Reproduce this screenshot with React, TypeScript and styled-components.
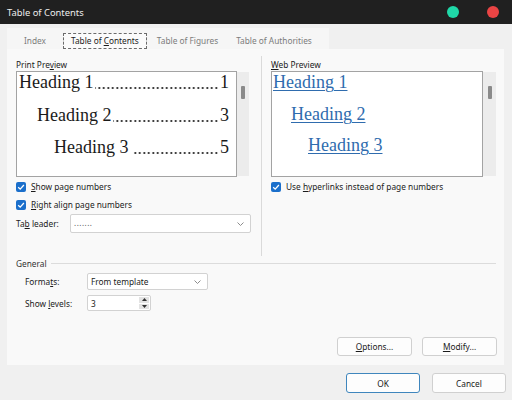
import React from "react"
import styled, { createGlobalStyle } from "styled-components"

const GlobalStyle = createGlobalStyle`
  html, body {
    margin: 0;
    padding: 0;
    background: #f0f0f0;
  }
`

const Window = styled.div`
  width: 512px;
  height: 400px;
  overflow: hidden;
  display: flex;
  flex-direction: column;
  background: #f0f0f0;
  font-family: "Noto Sans", "Open Sans", sans-serif;
  font-size: 8.3px;
  color: #1b1b1b;
`

const TitleBar = styled.div`
  height: 24px;
  flex: none;
  display: flex;
  align-items: center;
  padding-left: 7px;
  background: #202020;
  color: #ececec;
  font-size: 9.4px;
`

const Title = styled.div`
  flex: 1;
`

const Dot = styled.span<{ $color: string }>`
  width: 12px;
  height: 12px;
  border-radius: 50%;
  background: ${(p) => p.$color};
  margin-right: 28px;

  &:last-child {
    margin-right: 13px;
  }
`

const TabStrip = styled.div`
  align-self: flex-start;
  margin: 4px 0 0 7px;
  height: 21px;
  display: flex;
  align-items: flex-end;
  gap: 2px;
  padding: 0 9px;
  background: #f6f6f6;
`

const Tab = styled.div<{ $active?: boolean }>`
  height: 16px;
  box-sizing: border-box;
  padding: 0 7px;
  line-height: 14px;
  border: 1px dashed ${(p) => (p.$active ? "#6b6b6b" : "transparent")};
  background: ${(p) => (p.$active ? "#fbfbfb" : "transparent")};
  color: ${(p) => (p.$active ? "#1b1b1b" : "#7c7c7c")};

  &:first-child {
    margin-right: 7px;
  }
`

const Panel = styled.div`
  height: 316px;
  flex: none;
  box-sizing: border-box;
  margin: 0 8px 0 7px;
  padding: 10px 7px 0 9px;
  display: flex;
  flex-direction: column;
  background: #f9f9f9;
`

const TopArea = styled.div`
  height: 197px;
  display: flex;
`

const Column = styled.div<{ $width: number }>`
  width: ${(p) => p.$width}px;
  display: flex;
  flex-direction: column;
`

const Divider = styled.div`
  width: 1px;
  margin: -3px 9px 0 10px;
  background: #dadada;
`

const Label = styled.div`
  height: 12px;
  line-height: 12px;
`

const U = styled.span`
  text-decoration: underline;
  text-underline-offset: 1px;
`

const PreviewRow = styled.div`
  display: flex;
  height: 106px;
`

const PreviewBox = styled.div<{ $width: number; $gap: number }>`
  width: ${(p) => p.$width}px;
  box-sizing: border-box;
  border: 1px solid #a3a3a3;
  background: #fff;
  padding: 0 7px 0 1px;
  display: flex;
  flex-direction: column;
  gap: ${(p) => p.$gap}px;
  overflow: hidden;
  font-family: "Liberation Serif", "Times New Roman", serif;
  font-size: 18px;
  line-height: 20px;
`

const TocLine = styled.div<{ $indent: number }>`
  display: flex;
  padding-left: ${(p) => p.$indent}px;
  color: #1a1a1a;
  white-space: nowrap;
`

/* dot leader between a heading and its page number */
const Leader = styled.span<{ $gap?: number }>`
  flex: 1;
  min-width: 0;
  margin: 0 1px 0 ${(p) => p.$gap ?? 2}px;
  background-image: radial-gradient(circle, #1a1a1a 0.85px, transparent 1.15px);
  background-size: 4.5px 4px;
  background-repeat: repeat-x;
  background-position: right 0 top 14px;
`

const WebLink = styled.div<{ $indent: number }>`
  padding-left: ${(p) => p.$indent}px;
  color: #2f6cae;
  text-decoration: underline;
  text-underline-offset: 2px;
  text-decoration-thickness: 1px;
  white-space: nowrap;
`

const ScrollTrack = styled.div<{ $width: number }>`
  width: ${(p) => p.$width}px;
  margin: 1px 0;
  background: #ececec;
  display: flex;
  justify-content: center;
  padding-top: 14px;
  box-sizing: border-box;
`

const Thumb = styled.div`
  width: 4px;
  height: 13px;
  border-radius: 1px;
  background: #8a8a8a;
`

const CheckRow = styled.div`
  height: 17px;
  margin-top: 1px;
  display: flex;
  align-items: center;
  gap: 5px;
`

const CheckBox = styled.span`
  width: 10px;
  height: 10px;
  border-radius: 2px;
  background: #1b6fcb;
  display: flex;
  align-items: center;
  justify-content: center;
`

const LeaderRow = styled.div`
  height: 19px;
  margin-top: 1px;
  display: flex;
  align-items: center;
`

const RowLabel = styled.div<{ $width: number }>`
  width: ${(p) => p.$width}px;
  flex: none;
`

const Select = styled.div<{ $width?: number }>`
  ${(p) => (p.$width ? `width: ${p.$width}px;` : "flex: 1;")}
  height: 100%;
  box-sizing: border-box;
  border: 1px solid #d2d2d2;
  border-radius: 2px;
  background: #fff;
  display: flex;
  align-items: center;
  justify-content: space-between;
  padding: 0 6px 0 3px;
`

const DotsValue = styled.span`
  color: #555;
  letter-spacing: 0.5px;
  font-size: 8px;
  margin-top: -3px;
`

const GeneralHeader = styled.div`
  height: 14px;
  display: flex;
  align-items: center;
  color: #333;
`

const HeaderLine = styled.div`
  flex: 1;
  height: 1px;
  margin: 0 1px 0 4px;
  background: #dcdcdc;
`

const FieldRow = styled.div<{ $height: number; $top: number }>`
  height: ${(p) => p.$height}px;
  margin-top: ${(p) => p.$top}px;
  padding-left: 9px;
  display: flex;
  align-items: center;
`

const Spin = styled.div`
  width: 64px;
  height: 100%;
  box-sizing: border-box;
  border: 1px solid #d2d2d2;
  border-radius: 2px;
  background: #fff;
  display: flex;
  align-items: center;
  justify-content: space-between;
  padding: 1px 1px 1px 3px;
`

const SpinButtons = styled.div`
  width: 10px;
  height: 100%;
  display: flex;
  flex-direction: column;
  gap: 1px;
`

const SpinButton = styled.div`
  flex: 1;
  background: #e3e3e3;
  display: flex;
  align-items: center;
  justify-content: center;
`

const ButtonRow = styled.div`
  margin-top: 26px;
  display: flex;
  justify-content: flex-end;
  gap: 10px;
`

const Button = styled.div<{ $primary?: boolean }>`
  width: 75px;
  height: 19px;
  box-sizing: border-box;
  border: 1px solid ${(p) => (p.$primary ? "#3f86bd" : "#d0d0d0")};
  border-radius: 3px;
  background: #fdfdfd;
  display: flex;
  align-items: center;
  justify-content: center;
  color: #1b1b1b;
`

const Footer = styled.div`
  display: flex;
  justify-content: flex-end;
  gap: 12px;
  padding: 8px 6px 0 0;

  ${Button} {
    width: 74px;
    height: 20px;
  }
`

const Check = () => (
  <CheckBox>
    <svg width="8" height="8" viewBox="0 0 8 8">
      <path d="M1.2 4.2 L3.2 6.1 L6.9 2" stroke="#fff" strokeWidth="1.3" fill="none" />
    </svg>
  </CheckBox>
)

const Chevron = () => (
  <svg width="7" height="4" viewBox="0 0 7 4">
    <path d="M0.5 0.5 L3.5 3.5 L6.5 0.5" stroke="#8c8c8c" strokeWidth="1" fill="none" />
  </svg>
)

export default function App() {
  return (
    <Window>
      <GlobalStyle />
      <TitleBar>
        <Title>Table of Contents</Title>
        <Dot $color="#1fd8a8" />
        <Dot $color="#ea4444" />
      </TitleBar>

      <TabStrip>
        <Tab>Index</Tab>
        <Tab $active>
          Table of <U>C</U>ontents
        </Tab>
        <Tab>Table of Figures</Tab>
        <Tab>Table of Authorities</Tab>
      </TabStrip>

      <Panel>
        <TopArea>
          <Column $width={235}>
            <Label>
              Print Pre<U>v</U>iew
            </Label>
            <PreviewRow>
              <PreviewBox $width={221} $gap={12.5}>
                <TocLine $indent={1}>
                  Heading 1<Leader />1
                </TocLine>
                <TocLine $indent={19}>
                  Heading 2<Leader />3
                </TocLine>
                <TocLine $indent={36}>
                  Heading 3<Leader $gap={5} />5
                </TocLine>
              </PreviewBox>
              <ScrollTrack $width={12}>
                <Thumb />
              </ScrollTrack>
            </PreviewRow>
            <CheckRow>
              <Check />
              <span>
                <U>S</U>how page numbers
              </span>
            </CheckRow>
            <CheckRow>
              <Check />
              <span>
                <U>R</U>ight align page numbers
              </span>
            </CheckRow>
            <LeaderRow>
              <RowLabel $width={54}>
                Ta<U>b</U> leader:
              </RowLabel>
              <Select>
                <DotsValue>.......</DotsValue>
                <Chevron />
              </Select>
            </LeaderRow>
          </Column>

          <Divider />

          <Column $width={226}>
            <Label>
              <U>W</U>eb Preview
            </Label>
            <PreviewRow>
              <PreviewBox $width={212} $gap={11.5}>
                <WebLink $indent={0}>Heading 1</WebLink>
                <WebLink $indent={18}>Heading 2</WebLink>
                <WebLink $indent={35}>Heading 3</WebLink>
              </PreviewBox>
              <ScrollTrack $width={13}>
                <Thumb />
              </ScrollTrack>
            </PreviewRow>
            <CheckRow>
              <Check />
              <span>
                Use <U>h</U>yperlinks instead of page numbers
              </span>
            </CheckRow>
          </Column>
        </TopArea>

        <GeneralHeader>
          General
          <HeaderLine />
        </GeneralHeader>
        <FieldRow $height={17} $top={3}>
          <RowLabel $width={62}>
            Forma<U>t</U>s:
          </RowLabel>
          <Select $width={121}>
            <span>From template</span>
            <Chevron />
          </Select>
        </FieldRow>
        <FieldRow $height={16} $top={5}>
          <RowLabel $width={62}>
            Show <U>l</U>evels:
          </RowLabel>
          <Spin>
            <span>3</span>
            <SpinButtons>
              <SpinButton>
                <svg width="5" height="3" viewBox="0 0 5 3">
                  <path d="M0 3 L2.5 0 L5 3 Z" fill="#333" />
                </svg>
              </SpinButton>
              <SpinButton>
                <svg width="5" height="3" viewBox="0 0 5 3">
                  <path d="M0 0 L2.5 3 L5 0 Z" fill="#333" />
                </svg>
              </SpinButton>
            </SpinButtons>
          </Spin>
        </FieldRow>

        <ButtonRow>
          <Button>
            <span>
              <U>O</U>ptions...
            </span>
          </Button>
          <Button>
            <span>
              <U>M</U>odify...
            </span>
          </Button>
        </ButtonRow>
      </Panel>

      <Footer>
        <Button $primary>OK</Button>
        <Button>Cancel</Button>
      </Footer>
    </Window>
  )
}
